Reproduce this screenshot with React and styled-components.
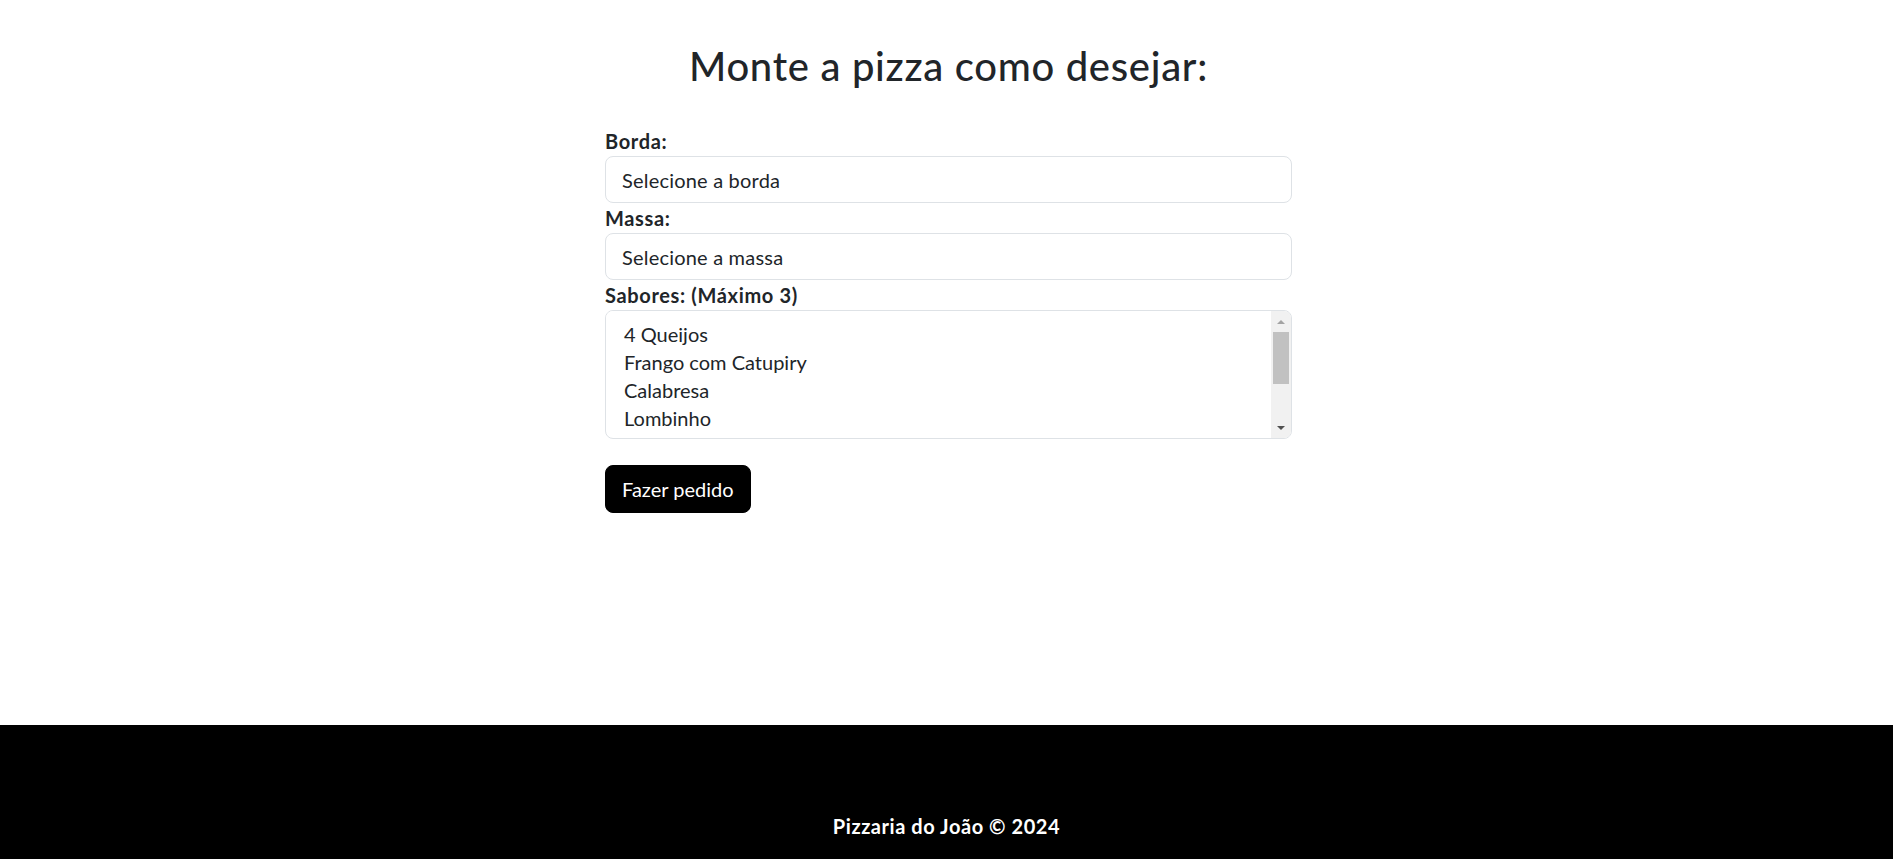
import React from 'react'
import styled, { createGlobalStyle } from 'styled-components'

const GlobalStyle = createGlobalStyle`
  * {
    box-sizing: border-box;
  }
  body {
    margin: 0;
    font-family: 'Segoe UI', Lato, 'Noto Sans', sans-serif;
    color: #212529;
    background: #fff;
  }
`

const Page = styled.div`
  display: flex;
  flex-direction: column;
  min-height: 100vh;
`

const Main = styled.main`
  flex: 1;
  padding-top: 42px;
`

const Title = styled.h1`
  margin: 0 0 36px;
  font-size: 40px;
  font-weight: 500;
  line-height: 1.2;
  letter-spacing: 0.7px;
  text-align: center;
  padding-left: 4px;
`

const Form = styled.form`
  width: 687px;
  margin: 0 auto;
  position: relative;
  left: 2px;
`

const Label = styled.label`
  display: block;
  font-size: 20px;
  font-weight: 700;
  line-height: 30px;
  letter-spacing: 0.65px;
`

const Select = styled.select`
  display: block;
  width: 100%;
  height: 47px;
  padding: 7px 16px;
  font-family: inherit;
  font-size: 20px;
  line-height: 30px;
  letter-spacing: 0.2px;
  color: #212529;
  background: #fff;
  border: 1px solid #dee2e6;
  border-radius: 8px;
  appearance: none;
  outline: none;
`

const ListBox = styled.div`
  display: flex;
  height: 129px;
  background: #fff;
  border: 1px solid #dee2e6;
  border-radius: 8px;
  overflow: hidden;
`

const ListSelect = styled.select`
  flex: 1;
  min-width: 0;
  margin-bottom: 6px;
  padding: 9px 0 0 16px;
  font-family: inherit;
  font-size: 20px;
  color: #212529;
  background: #fff;
  border: none;
  outline: none;
  overflow: hidden;

  option {
    padding: 2px 2px;
    color: #212529;
  }
`

const ScrollRail = styled.div`
  display: flex;
  flex-direction: column;
  width: 20px;
  background: #f1f1f1;
`

const ScrollArrow = styled.div`
  display: flex;
  align-items: center;
  justify-content: center;
  height: 21px;
`

const Triangle = styled.span`
  width: 0;
  height: 0;
  border-left: 4px solid transparent;
  border-right: 4px solid transparent;
  ${(p) =>
    p.$down
      ? `border-top: 4px solid ${p.$color};`
      : `border-bottom: 4px solid ${p.$color};`}
`

const ScrollTrack = styled.div`
  flex: 1;
  padding: 0 2px;
`

const ScrollThumb = styled.div`
  height: 52px;
  background: #c1c1c1;
`

const SubmitButton = styled.button`
  margin-top: 26px;
  padding: 8px 16px;
  font-family: inherit;
  font-size: 20px;
  line-height: 30px;
  color: #fff;
  background: #000;
  border: 1px solid #000;
  border-radius: 8px;
  cursor: pointer;
`

const Footer = styled.footer`
  height: 134px;
  padding-top: 86px;
  background: #000;
  color: #fff;
  text-align: center;
`

const FooterText = styled.p`
  margin: 0;
  font-size: 20px;
  font-weight: 700;
  line-height: 30px;
  letter-spacing: 0.55px;
`

const sabores = [
  '4 Queijos',
  'Frango com Catupiry',
  'Calabresa',
  'Lombinho',
  'Portuguesa',
  'Marguerita',
  'Napolitana',
]

export default function App() {
  return (
    <Page>
      <GlobalStyle />
      <Main>
        <Title>Monte a pizza como desejar:</Title>
        <Form onSubmit={(e) => e.preventDefault()}>
          <Label htmlFor="borda">Borda:</Label>
          <Select id="borda" defaultValue="">
            <option value="" disabled>
              Selecione a borda
            </option>
            <option>Cheddar</option>
            <option>Catupiry</option>
          </Select>
          <Label htmlFor="massa">Massa:</Label>
          <Select id="massa" defaultValue="">
            <option value="" disabled>
              Selecione a massa
            </option>
            <option>Tradicional</option>
            <option>Integral</option>
          </Select>
          <Label htmlFor="sabores">Sabores: (Máximo 3)</Label>
          <ListBox>
            <ListSelect id="sabores" multiple defaultValue={[]}>
              {sabores.map((s) => (
                <option key={s}>{s}</option>
              ))}
            </ListSelect>
            <ScrollRail>
              <ScrollArrow>
                <Triangle $color="#a3a3a3" />
              </ScrollArrow>
              <ScrollTrack>
                <ScrollThumb />
              </ScrollTrack>
              <ScrollArrow>
                <Triangle $down $color="#505050" />
              </ScrollArrow>
            </ScrollRail>
          </ListBox>
          <SubmitButton type="submit">Fazer pedido</SubmitButton>
        </Form>
      </Main>
      <Footer>
        <FooterText>Pizzaria do João © 2024</FooterText>
      </Footer>
    </Page>
  )
}
